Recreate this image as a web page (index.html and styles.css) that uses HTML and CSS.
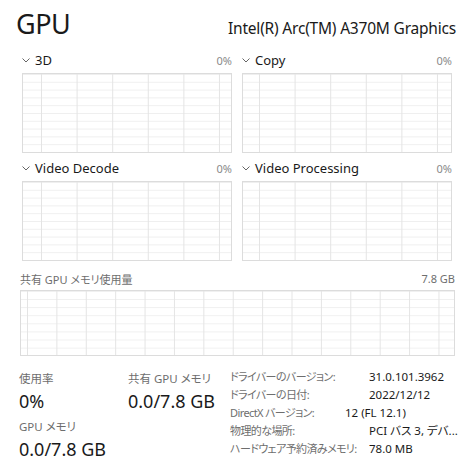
FILE: index.html
```html
<!DOCTYPE html>
<html lang="ja">
<head>
    <meta charset="UTF-8">
    <title>GPU</title>
    <link rel="stylesheet" href="styles.css">
</head>
<body>
    <div class="page">
        <header class="title-row">
            <h1>GPU</h1>
            <div class="adapter">Intel(R) Arc(TM) A370M Graphics</div>
        </header>

        <section class="engines">
            <div class="engine">
                <div class="engine-head">
                    <svg class="chevron" width="8" height="5" viewBox="0 0 8 5"><polyline points="0.5,0.5 4,4 7.5,0.5" fill="none" stroke="#666" stroke-width="1"/></svg>
                    <span class="engine-name">3D</span>
                    <span class="engine-pct">0%</span>
                </div>
                <div class="graph graph-a"></div>
            </div>
            <div class="engine">
                <div class="engine-head">
                    <svg class="chevron" width="8" height="5" viewBox="0 0 8 5"><polyline points="0.5,0.5 4,4 7.5,0.5" fill="none" stroke="#666" stroke-width="1"/></svg>
                    <span class="engine-name">Copy</span>
                    <span class="engine-pct">0%</span>
                </div>
                <div class="graph graph-b"></div>
            </div>
            <div class="engine">
                <div class="engine-head">
                    <svg class="chevron" width="8" height="5" viewBox="0 0 8 5"><polyline points="0.5,0.5 4,4 7.5,0.5" fill="none" stroke="#666" stroke-width="1"/></svg>
                    <span class="engine-name">Video Decode</span>
                    <span class="engine-pct">0%</span>
                </div>
                <div class="graph graph-a"></div>
            </div>
            <div class="engine">
                <div class="engine-head">
                    <svg class="chevron" width="8" height="5" viewBox="0 0 8 5"><polyline points="0.5,0.5 4,4 7.5,0.5" fill="none" stroke="#666" stroke-width="1"/></svg>
                    <span class="engine-name">Video Processing</span>
                    <span class="engine-pct">0%</span>
                </div>
                <div class="graph graph-b"></div>
            </div>
        </section>

        <section class="shared">
            <div class="shared-head">
                <span>共有 GPU メモリ使用量</span>
                <span>7.8 GB</span>
            </div>
            <div class="graph graph-wide"></div>
        </section>

        <section class="stats">
            <div class="stat-col">
                <div class="stat">
                    <div class="stat-label">使用率</div>
                    <div class="stat-value">0%</div>
                </div>
                <div class="stat">
                    <div class="stat-label">GPU メモリ</div>
                    <div class="stat-value">0.0/7.8 GB</div>
                </div>
            </div>
            <div class="stat-col">
                <div class="stat">
                    <div class="stat-label">共有 GPU メモリ</div>
                    <div class="stat-value">0.0/7.8 GB</div>
                </div>
            </div>
            <div class="props">
                <span class="prop-label">ドライバーのバージョン:</span>
                <span class="prop-value">31.0.101.3962</span>
                <span class="prop-label">ドライバーの日付:</span>
                <span class="prop-value">2022/12/12</span>
                <span class="prop-label">DirectX バージョン:</span>
                <span class="prop-value prop-shifted">12 (FL 12.1)</span>
                <span class="prop-label">物理的な場所:</span>
                <span class="prop-value">PCI バス 3, デバ...</span>
                <span class="prop-label">ハードウェア予約済みメモリ:</span>
                <span class="prop-value">78.0 MB</span>
            </div>
        </section>
    </div>
</body>
</html>
```

FILE: styles.css
```css
* {
    margin: 0;
    padding: 0;
    box-sizing: border-box;
}

body {
    font-family: "Noto Sans", "Noto Sans CJK JP", sans-serif;
    font-feature-settings: "palt";
    background: #fff;
    color: #1a1a1a;
}

.page {
    width: 470px;
    height: 472px;
    overflow: hidden;
}

/* title */
.title-row {
    display: flex;
    justify-content: space-between;
    align-items: baseline;
    padding: 4px 14px 0 16px;
    height: 49px;
}

h1 {
    font-size: 27px;
    font-weight: 400;
    line-height: 40px;
    letter-spacing: -0.5px;
}

.adapter {
    font-size: 15.5px;
    letter-spacing: -0.2px;
}

/* engine graphs */
.engines {
    display: grid;
    grid-template-columns: 210px 210px;
    column-gap: 10px;
    row-gap: 4px;
    padding-left: 22px;
}

.engine-head {
    display: flex;
    align-items: center;
    height: 22px;
    margin-bottom: 2px;
}

.chevron {
    margin: 1px 5px 0 0;
}

.engine-name {
    font-size: 13px;
    flex: 1;
}

.engine-pct {
    font-size: 11px;
    color: #8a8a8a;
}

.graph {
    border: 1px solid #dcdcdc;
    background-color: #fff;
    background-image:
        linear-gradient(to right, #e4e4e4 1px, transparent 1px),
        linear-gradient(to bottom, #efefef 1px, transparent 1px);
}

.graph-a,
.graph-b {
    height: 80px;
    background-size: 35.6px 100%, 100% 7.8px;
}

.graph-a {
    background-position: 18px 0, 0 0;
}

.graph-b {
    background-position: 16px 0, 0 0;
}

/* shared memory */
.shared {
    padding: 8px 15px 0 20px;
}

.shared-head {
    display: flex;
    justify-content: space-between;
    font-size: 11px;
    color: #6e6e6e;
    height: 19px;
    align-items: center;
}

.graph-wide {
    height: 66px;
    margin-top: 2px;
    background-size: 29.4px 100%, 100% 8.1px;
    background-position: 6px 0, 0 0;
}

/* stats */
.stats {
    display: grid;
    grid-template-columns: 109px 102px 1fr;
    padding: 15px 0 0 19px;
}

.stat {
    margin-bottom: 4px;
}

.stat-label {
    font-size: 11.5px;
    color: #6e6e6e;
    line-height: 16px;
}

.stat-value {
    font-size: 18px;
    line-height: 28px;
}

.props {
    display: grid;
    grid-template-columns: 139px auto;
    grid-auto-rows: 18px;
    align-items: center;
    font-size: 11.5px;
    margin-top: -4px;
}

.prop-label {
    color: #6e6e6e;
    font-size: 11px;
    letter-spacing: -0.6px;
    white-space: nowrap;
}

.prop-value {
    color: #1a1a1a;
    white-space: nowrap;
}

.prop-shifted {
    margin-left: -24px;
}
```
